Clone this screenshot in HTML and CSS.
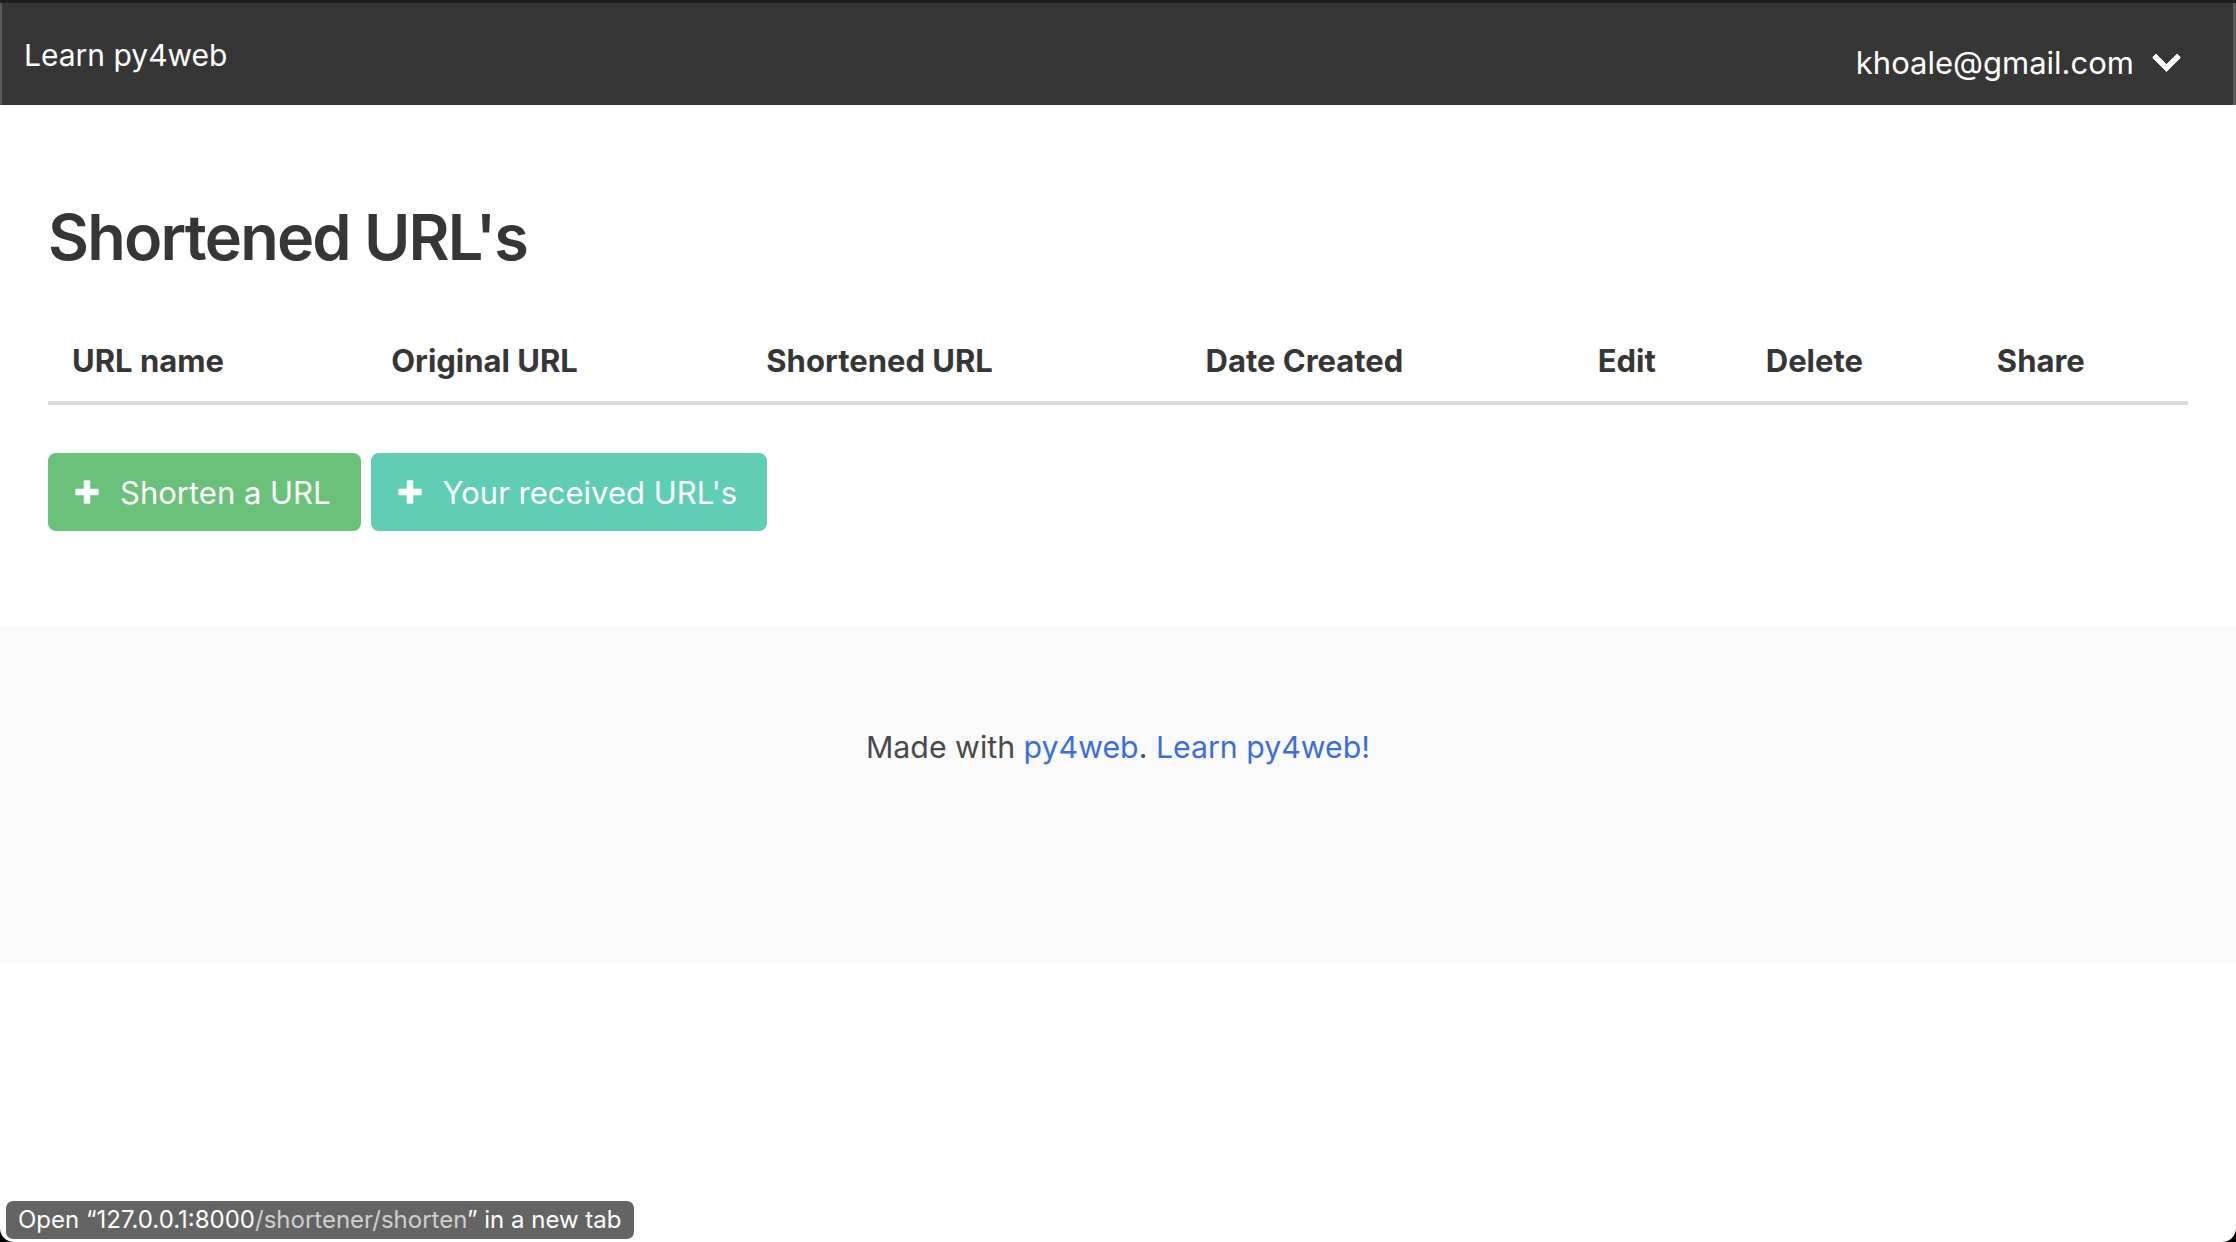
FILE: index.html
```html
<!DOCTYPE html>
<html lang="en">
<head>
<meta charset="utf-8">
<title>Shortened URL's</title>
<link rel="stylesheet" href="styles.css">
</head>
<body>
<div class="window">
  <div class="chrome-strip"></div>
  <nav class="navbar">
    <a class="navbar-brand" href="#">Learn py4web</a>
    <div class="navbar-end">
      <a class="navbar-link" href="#">khoale@gmail.com<span class="arrow"></span></a>
    </div>
  </nav>

  <section class="section">
    <h1 class="title">Shortened URL's</h1>
    <table class="table">
      <thead>
        <tr>
          <th class="c-name">URL name</th>
          <th class="c-orig">Original URL</th>
          <th class="c-short">Shortened URL</th>
          <th class="c-date">Date Created</th>
          <th class="c-edit">Edit</th>
          <th class="c-del">Delete</th>
          <th class="c-share">Share</th>
        </tr>
      </thead>
      <tbody></tbody>
    </table>
    <div class="buttons">
      <a class="button is-success" href="#"><span class="icon"><svg viewBox="0 0 28 28" width="26" height="26"><path d="M11 2h6v9h9v6h-9v9h-6v-9H2v-6h9z" fill="#fff" stroke="#fff" stroke-width="1" stroke-linejoin="round"/></svg></span><span>Shorten a URL</span></a>
      <a class="button is-primary" href="#"><span class="icon"><svg viewBox="0 0 28 28" width="26" height="26"><path d="M11 2h6v9h9v6h-9v9h-6v-9H2v-6h9z" fill="#fff" stroke="#fff" stroke-width="1" stroke-linejoin="round"/></svg></span><span>Your received URL's</span></a>
    </div>
  </section>

  <footer class="footer">
    <p>Made with <a href="#">py4web</a>. <a href="#">Learn py4web!</a></p>
  </footer>

  <div class="status-bubble">Open “127.0.0.1:8000<span class="path">/shortener/shorten</span>” in a new tab</div>
</div>
</body>
</html>
```

FILE: styles.css
```css
html {
  background: #000;
}
body {
  margin: 0;
  font-family: "Inter", "Roboto", "Liberation Sans", sans-serif;
  color: #4a4a4a;
}
a {
  text-decoration: none;
}
.window {
  min-height: 100vh;
  background: #fff;
  border-bottom-left-radius: 14px;
  border-bottom-right-radius: 14px;
  overflow: hidden;
  position: relative;
}
.chrome-strip {
  height: 3px;
  background: #1e1c1e;
}
.navbar {
  height: 102px;
  background: #363636;
  display: flex;
  align-items: center;
  justify-content: space-between;
  border-left: 2px solid #5a5a5a;
  border-right: 3px solid #5a5a5a;
}
.navbar-brand {
  color: #fff;
  font-size: 30px;
  padding: 0 22px;
  margin-top: 2px;
}
.navbar-end {
  display: flex;
  align-items: center;
}
.navbar-link {
  color: #fff;
  font-size: 31px;
  display: flex;
  align-items: center;
  padding: 0 56px 0 0;
  margin-top: 16px;
}
.arrow {
  width: 15px;
  height: 15px;
  border: 6px solid #fff;
  border-top: 0;
  border-right: 0;
  border-radius: 2px;
  transform: rotate(-45deg);
  margin-left: 22px;
  margin-top: -10px;
}
.section {
  padding: 96px 48px 96px 48px;
}
.title {
  margin: 0 0 48px 0;
  font-size: 63px;
  font-weight: 600;
  line-height: 72px;
  color: #363636;
  letter-spacing: -1.8px;
}
.table {
  width: 100%;
  table-layout: fixed;
  border-collapse: collapse;
  margin-bottom: 48px;
}
.table th {
  box-sizing: border-box;
  text-align: left;
  font-size: 31px;
  font-weight: 700;
  color: #363636;
  line-height: 48px;
  padding: 16px 24px;
  border-bottom: 4px solid #dbdbdb;
  white-space: nowrap;
}
.c-name { width: 319px; }
.c-orig { width: 375px; }
.c-short { width: 439px; }
.c-date { width: 392px; }
.c-edit { width: 168px; }
.c-del { width: 231px; }
.c-share { width: 215px; }
.buttons {
  display: flex;
  gap: 10px;
}
.button {
  display: inline-flex;
  align-items: center;
  height: 78px;
  box-sizing: border-box;
  padding: 0 30px 0 26px;
  border-radius: 8px;
  color: #fff;
  font-size: 31px;
}
.button .icon {
  display: inline-flex;
  width: 26px;
  height: 26px;
  margin-right: 20px;
}
.is-success {
  background: #6ac17a;
}
.is-primary {
  background: #5fceb4;
}
.footer {
  background: #fafafa;
  padding: 96px 48px 192px;
  text-align: center;
}
.footer p {
  margin: 0;
  font-size: 30.3px;
  line-height: 48px;
  color: #4a4a4a;
}
.footer a {
  color: #3a6fd9;
}
.status-bubble {
  position: absolute;
  left: 6px;
  bottom: 3px;
  background: #646464;
  color: #fff;
  font-size: 24px;
  line-height: 38px;
  padding: 0 12px 0 12px;
  border-radius: 7px;
}
.status-bubble .path {
  color: #cfcfcf;
}
```
